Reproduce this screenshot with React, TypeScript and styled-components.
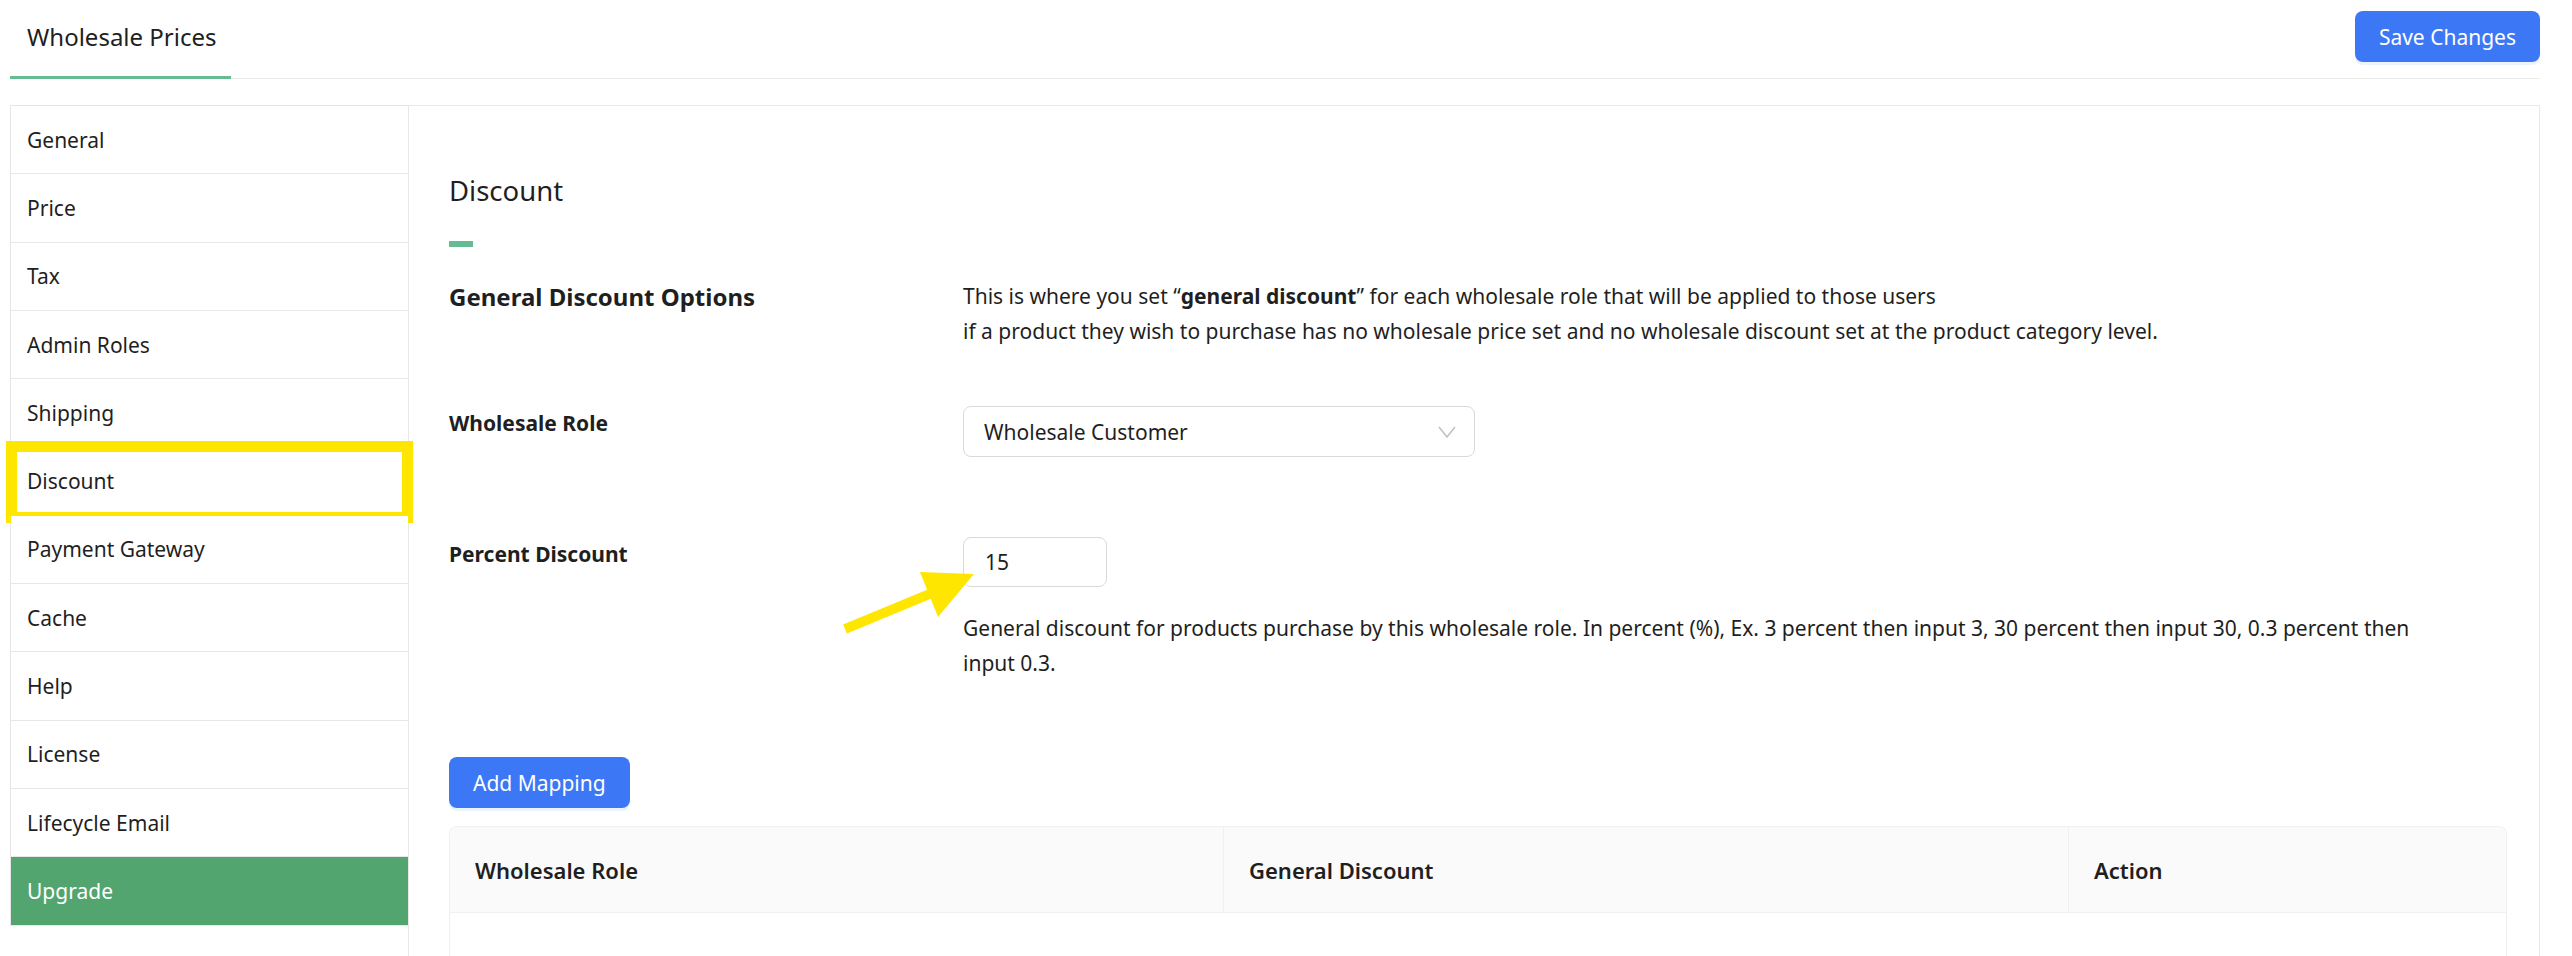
import React from 'react';
import styled, { createGlobalStyle } from 'styled-components';

const GlobalStyle = createGlobalStyle`
  html, body {
    margin: 0;
    padding: 0;
    background: #ffffff;
  }
  body {
    font-family: "Segoe UI", "Noto Sans", "Open Sans", sans-serif;
    font-size: 21px;
    color: #1f1f1f;
  }
  * {
    box-sizing: border-box;
  }
`;

const menu = [
  'General',
  'Price',
  'Tax',
  'Admin Roles',
  'Shipping',
  'Discount',
  'Payment Gateway',
  'Cache',
  'Help',
  'License',
  'Lifecycle Email',
  'Upgrade',
];

const Header = styled.header`
  display: flex;
  align-items: flex-start;
  justify-content: space-between;
  height: 79px;
  margin: 0 32px 0 10px;
  border-bottom: 1px solid #ebebeb;
`;

const Tab = styled.div`
  display: flex;
  align-items: center;
  width: 221px;
  height: 79px;
  padding: 0 0 3px 17px;
  border-bottom: 3px solid #67bb93;
  font-size: 24px;
  white-space: nowrap;
  color: #1f1f1f;
`;

const PrimaryButton = styled.button<{ $top?: number }>`
  height: 51px;
  margin-top: ${(p) => p.$top ?? 0}px;
  padding: 0 24px;
  border: none;
  border-radius: 8px;
  background: #3c78f6;
  box-shadow: 0 3px 0 rgba(5, 100, 255, 0.08);
  color: #ffffff;
  font-family: inherit;
  font-size: 21px;
  cursor: pointer;
`;

const Layout = styled.div`
  display: flex;
  align-items: flex-start;
  margin: 26px 32px 0 10px;
`;

const Sidebar = styled.nav`
  flex-shrink: 0;
  width: 398px;
  border-top: 1px solid #e5e5e5;
  border-left: 1px solid #e5e5e5;
`;

const MenuItem = styled.div<{ $upgrade?: boolean; $marked?: boolean }>`
  position: relative;
  display: flex;
  align-items: center;
  height: 68.3px;
  padding-left: 16px;
  border-bottom: 1px solid #e8e8e8;
  background: ${(p) => (p.$upgrade ? '#52a56e' : '#ffffff')};
  color: ${(p) => (p.$upgrade ? '#ffffff' : '#1f1f1f')};
  font-size: 21px;

  ${(p) =>
    p.$marked &&
    `
    &::after {
      content: '';
      position: absolute;
      top: -6px;
      left: -5px;
      right: -5px;
      bottom: -8px;
      border: 11px solid #ffe600;
      pointer-events: none;
    }
  `}
`;

const Panel = styled.main`
  flex: 1;
  min-height: 1000px;
  padding: 65px 32px 0 40px;
  border: 1px solid #e8e8e8;
  border-bottom: none;
`;

const Title = styled.h2`
  margin: 0;
  font-size: 27.5px;
  font-weight: 400;
  line-height: 39px;
`;

const TitleBar = styled.div`
  width: 24px;
  height: 6px;
  margin: 31px 0 32px;
  background: #67bb93;
`;

const Row = styled.div<{ $gap: number }>`
  display: grid;
  grid-template-columns: 514px 1fr;
  align-items: start;
  margin-bottom: ${(p) => p.$gap}px;
`;

const SectionLabel = styled.div`
  font-size: 24px;
  font-weight: 700;
  line-height: 35px;
`;

const Label = styled.div`
  font-size: 21px;
  font-weight: 700;
  line-height: 35px;
`;

const Text = styled.p<{ $top?: number }>`
  max-width: 1480px;
  margin: ${(p) => p.$top ?? 0}px 0 0;
  font-size: 21px;
  line-height: 34.5px;
`;

const Select = styled.div`
  display: flex;
  align-items: center;
  justify-content: space-between;
  width: 512px;
  height: 51px;
  padding: 0 18px 0 20px;
  border: 1px solid #d9d9d9;
  border-radius: 8px;
  font-size: 21px;
`;

const InputWrap = styled.div`
  position: relative;
`;

const Input = styled.div`
  display: flex;
  align-items: center;
  width: 144px;
  height: 50px;
  padding-left: 21px;
  border: 1px solid #d9d9d9;
  border-radius: 8px;
  font-size: 21px;
`;

const Arrow = styled.svg`
  position: absolute;
  left: -123px;
  top: 24px;
`;

const Table = styled.div`
  width: 100%;
  margin-top: 18px;
  border: 1px solid #f0f0f0;
  border-bottom: none;
  border-radius: 8px 8px 0 0;
`;

const HeadRow = styled.div`
  display: grid;
  grid-template-columns: 774px 845px 1fr;
  height: 86px;
  background: #fafafa;
  border-bottom: 1px solid #f0f0f0;
  border-radius: 8px 8px 0 0;
`;

const HeadCell = styled.div<{ $last?: boolean }>`
  display: flex;
  align-items: center;
  padding-left: 25px;
  border-right: ${(p) => (p.$last ? 'none' : '1px solid #f0f0f0')};
  font-size: 22px;
  font-weight: 600;
`;

const TableBody = styled.div`
  height: 200px;
`;

const App = (): JSX.Element => {
  return (
    <>
      <GlobalStyle />
      <Header>
        <Tab>Wholesale Prices</Tab>
        <PrimaryButton $top={11}>Save Changes</PrimaryButton>
      </Header>
      <Layout>
        <Sidebar>
          {menu.map((item) => (
            <MenuItem
              key={item}
              $upgrade={item === 'Upgrade'}
              $marked={item === 'Discount'}
            >
              {item}
            </MenuItem>
          ))}
        </Sidebar>
        <Panel>
          <Title>Discount</Title>
          <TitleBar />
          <Row $gap={58}>
            <SectionLabel>General Discount Options</SectionLabel>
            <Text>
              This is where you set “<b>general discount</b>” for each wholesale
              role that will be applied to those users
              <br />
              if a product they wish to purchase has no wholesale price set and
              no wholesale discount set at the product category level.
            </Text>
          </Row>
          <Row $gap={80}>
            <Label>Wholesale Role</Label>
            <Select>
              <span>Wholesale Customer</span>
              <svg width="18" height="12" viewBox="0 0 18 12">
                <polyline
                  points="1,1 9,11 17,1"
                  fill="none"
                  stroke="#bfbfbf"
                  strokeWidth="1.5"
                />
              </svg>
            </Select>
          </Row>
          <Row $gap={77}>
            <Label>Percent Discount</Label>
            <div>
              <InputWrap>
                <Input>15</Input>
                <Arrow width="140" height="80" viewBox="0 0 140 80">
                  <line
                    x1="5"
                    y1="68"
                    x2="92"
                    y2="32"
                    stroke="#ffe600"
                    strokeWidth="10"
                  />
                  <polygon points="80,11 98,56 134,13" fill="#ffe600" />
                </Arrow>
              </InputWrap>
              <Text $top={24}>
                General discount for products purchase by this wholesale role.
                In percent (%), Ex. 3 percent then input 3, 30 percent then
                input 30, 0.3 percent then input 0.3.
              </Text>
            </div>
          </Row>
          <PrimaryButton>Add Mapping</PrimaryButton>
          <Table>
            <HeadRow>
              <HeadCell>Wholesale Role</HeadCell>
              <HeadCell>General Discount</HeadCell>
              <HeadCell $last>Action</HeadCell>
            </HeadRow>
            <TableBody />
          </Table>
        </Panel>
      </Layout>
    </>
  );
};

export default App;
